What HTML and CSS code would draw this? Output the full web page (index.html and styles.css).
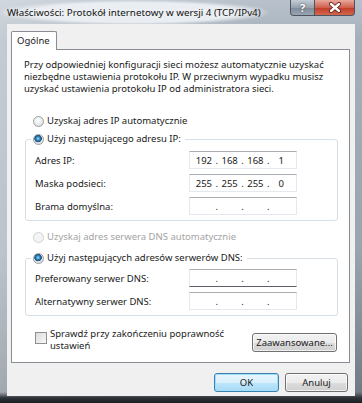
FILE: index.html
```html
<!DOCTYPE html>
<html lang="pl">
<head>
  <meta charset="UTF-8" />
  <title>Właściwości: Protokół internetowy w wersji 4 (TCP/IPv4)</title>
  <link rel="stylesheet" href="styles.css">
</head>
<body>

  <div class="window">
    <div class="titlebar">
      <span class="title">Właściwości: Protokół internetowy w wersji 4 (TCP/IPv4)</span>
      <div class="caption-buttons">
        <span class="cap-btn help">?</span>
        <span class="cap-btn close">
          <svg width="14" height="11" viewBox="0 0 14 11">
            <path d="M3 2 L11 9 M11 2 L3 9" stroke="#5a1a12" stroke-width="4" stroke-linecap="round" />
            <path d="M3 2 L11 9 M11 2 L3 9" stroke="#fff" stroke-width="2.4" stroke-linecap="round" />
          </svg>
        </span>
      </div>
    </div>

    <div class="client">
      <div class="tabs">
        <span class="tab">Ogólne</span>
      </div>

      <div class="panel">
        <p class="intro">Przy odpowiedniej konfiguracji sieci możesz automatycznie uzyskać<br>niezbędne ustawienia protokołu IP. W przeciwnym wypadku musisz<br>uzyskać ustawienia protokołu IP od administratora sieci.</p>

        <label class="radio first"><span class="radio-dot"></span>Uzyskaj adres IP automatycznie</label>

        <fieldset class="group">
          <legend><label class="radio"><span class="radio-dot checked"></span>Użyj następującego adresu IP:</label></legend>
          <div class="field-row">
            <span class="field-label">Adres IP:</span>
            <span class="ip-box"><span>192</span><i>.</i><span>168</span><i>.</i><span>168</span><i>.</i><span>1</span></span>
          </div>
          <div class="field-row">
            <span class="field-label">Maska podsieci:</span>
            <span class="ip-box"><span>255</span><i>.</i><span>255</span><i>.</i><span>255</span><i>.</i><span>0</span></span>
          </div>
          <div class="field-row">
            <span class="field-label">Brama domyślna:</span>
            <span class="ip-box"><span></span><i>.</i><span></span><i>.</i><span></span><i>.</i><span></span></span>
          </div>
        </fieldset>

        <label class="radio disabled dns-auto"><span class="radio-dot"></span>Uzyskaj adres serwera DNS automatycznie</label>

        <fieldset class="group dns">
          <legend><label class="radio"><span class="radio-dot checked"></span>Użyj następujących adresów serwerów DNS:</label></legend>
          <div class="field-row">
            <span class="field-label">Preferowany serwer DNS:</span>
            <span class="ip-box focused"><span></span><i>.</i><span></span><i>.</i><span></span><i>.</i><span></span></span>
          </div>
          <div class="field-row">
            <span class="field-label">Alternatywny serwer DNS:</span>
            <span class="ip-box"><span></span><i>.</i><span></span><i>.</i><span></span><i>.</i><span></span></span>
          </div>
        </fieldset>

        <div class="options-row">
          <label class="check"><span class="check-box"></span><span>Sprawdź przy zakończeniu poprawność<br>ustawień</span></label>
          <button class="btn advanced">Zaawansowane...</button>
        </div>
      </div>

      <div class="dialog-buttons">
        <button class="btn default">OK</button>
        <button class="btn cancel">Anuluj</button>
      </div>
    </div>
  </div>

</body>
</html>
```

FILE: styles.css
```css
body {
  margin: 0;
  font-family: "Noto Sans", "Open Sans", sans-serif;
  font-size: 9.5px;
  color: #1a1a1a;
}
.window {
  width: 362px;
  height: 403px;
  display: flex;
  flex-direction: column;
  background:
    linear-gradient(to bottom, rgba(0,0,0,0) 392px, #2c3136 398px, #1d2024 403px),
    linear-gradient(to right, rgba(255,255,255,0.35), rgba(255,255,255,0) 70%),
    linear-gradient(to bottom, #b9c2cc 0, #a5afba 40px, #9aa4af 250px, #6f7882 100%);
}
.titlebar {
  height: 24px;
  display: flex;
  align-items: flex-start;
}
.title {
  padding: 0 8px 0 7px;
  line-height: 25px;
  font-size: 9.8px;
  color: #111;
  white-space: nowrap;
  background: radial-gradient(ellipse at center, rgba(236,240,244,0.95) 55%, rgba(236,240,244,0) 72%);
  text-shadow: 0 0 6px #fff;
}
.caption-buttons {
  flex-shrink: 0;
  margin-left: auto;
  margin-right: 7px;
  display: flex;
}
.cap-btn {
  height: 16px;
  box-sizing: border-box;
  display: flex;
  align-items: center;
  justify-content: center;
  border: 1px solid #4b5561;
  border-top: none;
}
.help {
  width: 25px;
  border-radius: 0 0 0 4px;
  background: linear-gradient(to bottom, #c3cbd4, #98a3b0 50%, #7f8a97 51%, #9aa6b3);
  color: #fff;
  font-weight: bold;
  font-size: 11px;
  text-shadow: 0 0 2px #333;
}
.close {
  width: 40px;
  border-left: none;
  border-radius: 0 0 4px 0;
  background: linear-gradient(to bottom, #e8a89c, #d0604e 50%, #c03a25 51%, #d4674f);
}
.client {
  flex: 1;
  margin: 0 7px 7px;
  padding: 7px 0 0 4px;
  background: #f0f0f0;
}
.tabs {
  display: flex;
  height: 18px;
}
.tab {
  position: relative;
  z-index: 1;
  height: 19px;
  box-sizing: border-box;
  padding: 0 6px 0 5px;
  line-height: 18px;
  border: 1px solid #898c95;
  border-bottom: none;
  background: #fff;
  border-radius: 2px 2px 0 0;
}
.panel {
  width: 339px;
  height: 314px;
  box-sizing: border-box;
  border: 1px solid #898c95;
  background: #fff;
  padding: 0 11px 0 13px;
}
.intro {
  margin: 9px 0 0 -1px;
  line-height: 12px;
}
.radio {
  display: flex;
  align-items: center;
  height: 14px;
  line-height: 14px;
  white-space: nowrap;
}
.radio.first {
  margin: 19px 0 0 8px;
}
.radio-dot {
  width: 11px;
  height: 11px;
  box-sizing: border-box;
  margin-right: 3px;
  border: 1px solid #9b9d9f;
  border-radius: 50%;
  background: radial-gradient(circle at 40% 35%, #fff, #e1e3e5 70%, #cfd2d5);
}
.radio-dot.checked {
  background:
    radial-gradient(circle at 45% 40%, #9ee0ff 0, #2f7fb8 2px, #1b4f7a 3.5px, rgba(0,0,0,0) 4px),
    radial-gradient(circle at 40% 35%, #fff, #e1e3e5 70%, #cfd2d5);
}
.radio.disabled {
  color: #a3a3a3;
}
.radio.disabled .radio-dot {
  border-color: #cfd1d3;
  background: #f4f4f4;
}
.group {
  margin: 4px 0 0;
  padding: 5px 0 5px 9px;
  border: 1px solid #d5dfe5;
  border-radius: 3px;
  min-width: 0;
}
.group legend {
  margin-left: -4px;
  padding: 0 4px 0 2px;
}
.field-row {
  display: flex;
  align-items: center;
  height: 18px;
}
.field-row + .field-row {
  margin-top: 5px;
}
.field-label {
  width: 154px;
}
.ip-box {
  width: 108px;
  height: 18px;
  box-sizing: border-box;
  display: flex;
  align-items: center;
  padding: 0 4px 0 3px;
  border: 1px solid #e3e9ef;
  border-top-color: #abadb3;
  background: #fff;
}
.ip-box span {
  flex: 1;
  text-align: center;
}
.ip-box i {
  font-style: normal;
  width: 4px;
  text-align: center;
}
.ip-box.focused {
  border-bottom-color: #5d6066;
}
.radio.dns-auto {
  margin: 9px 0 0 8px;
}
.group.dns {
  margin-top: 7px;
  padding-top: 4px;
}
.options-row {
  margin-top: 12px;
  display: flex;
  justify-content: space-between;
  align-items: flex-start;
}
.check {
  display: flex;
  align-items: flex-start;
  margin-left: 10px;
  line-height: 11.5px;
}
.check-box {
  width: 12px;
  height: 12px;
  box-sizing: border-box;
  margin: 4px 3px 0 0;
  border: 1px solid #8e8f8f;
  background: linear-gradient(135deg, #dcdcdc, #f8f8f8);
}
.btn {
  font-family: inherit;
  font-size: 9.5px;
  color: #1a1a1a;
  height: 19px;
  padding: 0;
  border: 1px solid #707070;
  border-radius: 3px;
  background: linear-gradient(to bottom, #f2f2f2, #ebebeb 50%, #dddddd 51%, #cfcfcf);
  box-shadow: inset 0 0 0 1px rgba(255,255,255,0.7);
}
.advanced {
  width: 85px;
  margin: 5px 1px 0 0;
}
.dialog-buttons {
  margin-top: 10px;
  padding-right: 7px;
  display: flex;
  justify-content: flex-end;
  gap: 6px;
}
.default {
  width: 65px;
  border-color: #3c7fb1;
  background: linear-gradient(to bottom, #eaf6fd, #d9f0fc 50%, #bee6fd 51%, #a7d9f5);
  box-shadow: inset 0 0 0 1px #9ee0f8;
}
.cancel {
  width: 63px;
}
```
